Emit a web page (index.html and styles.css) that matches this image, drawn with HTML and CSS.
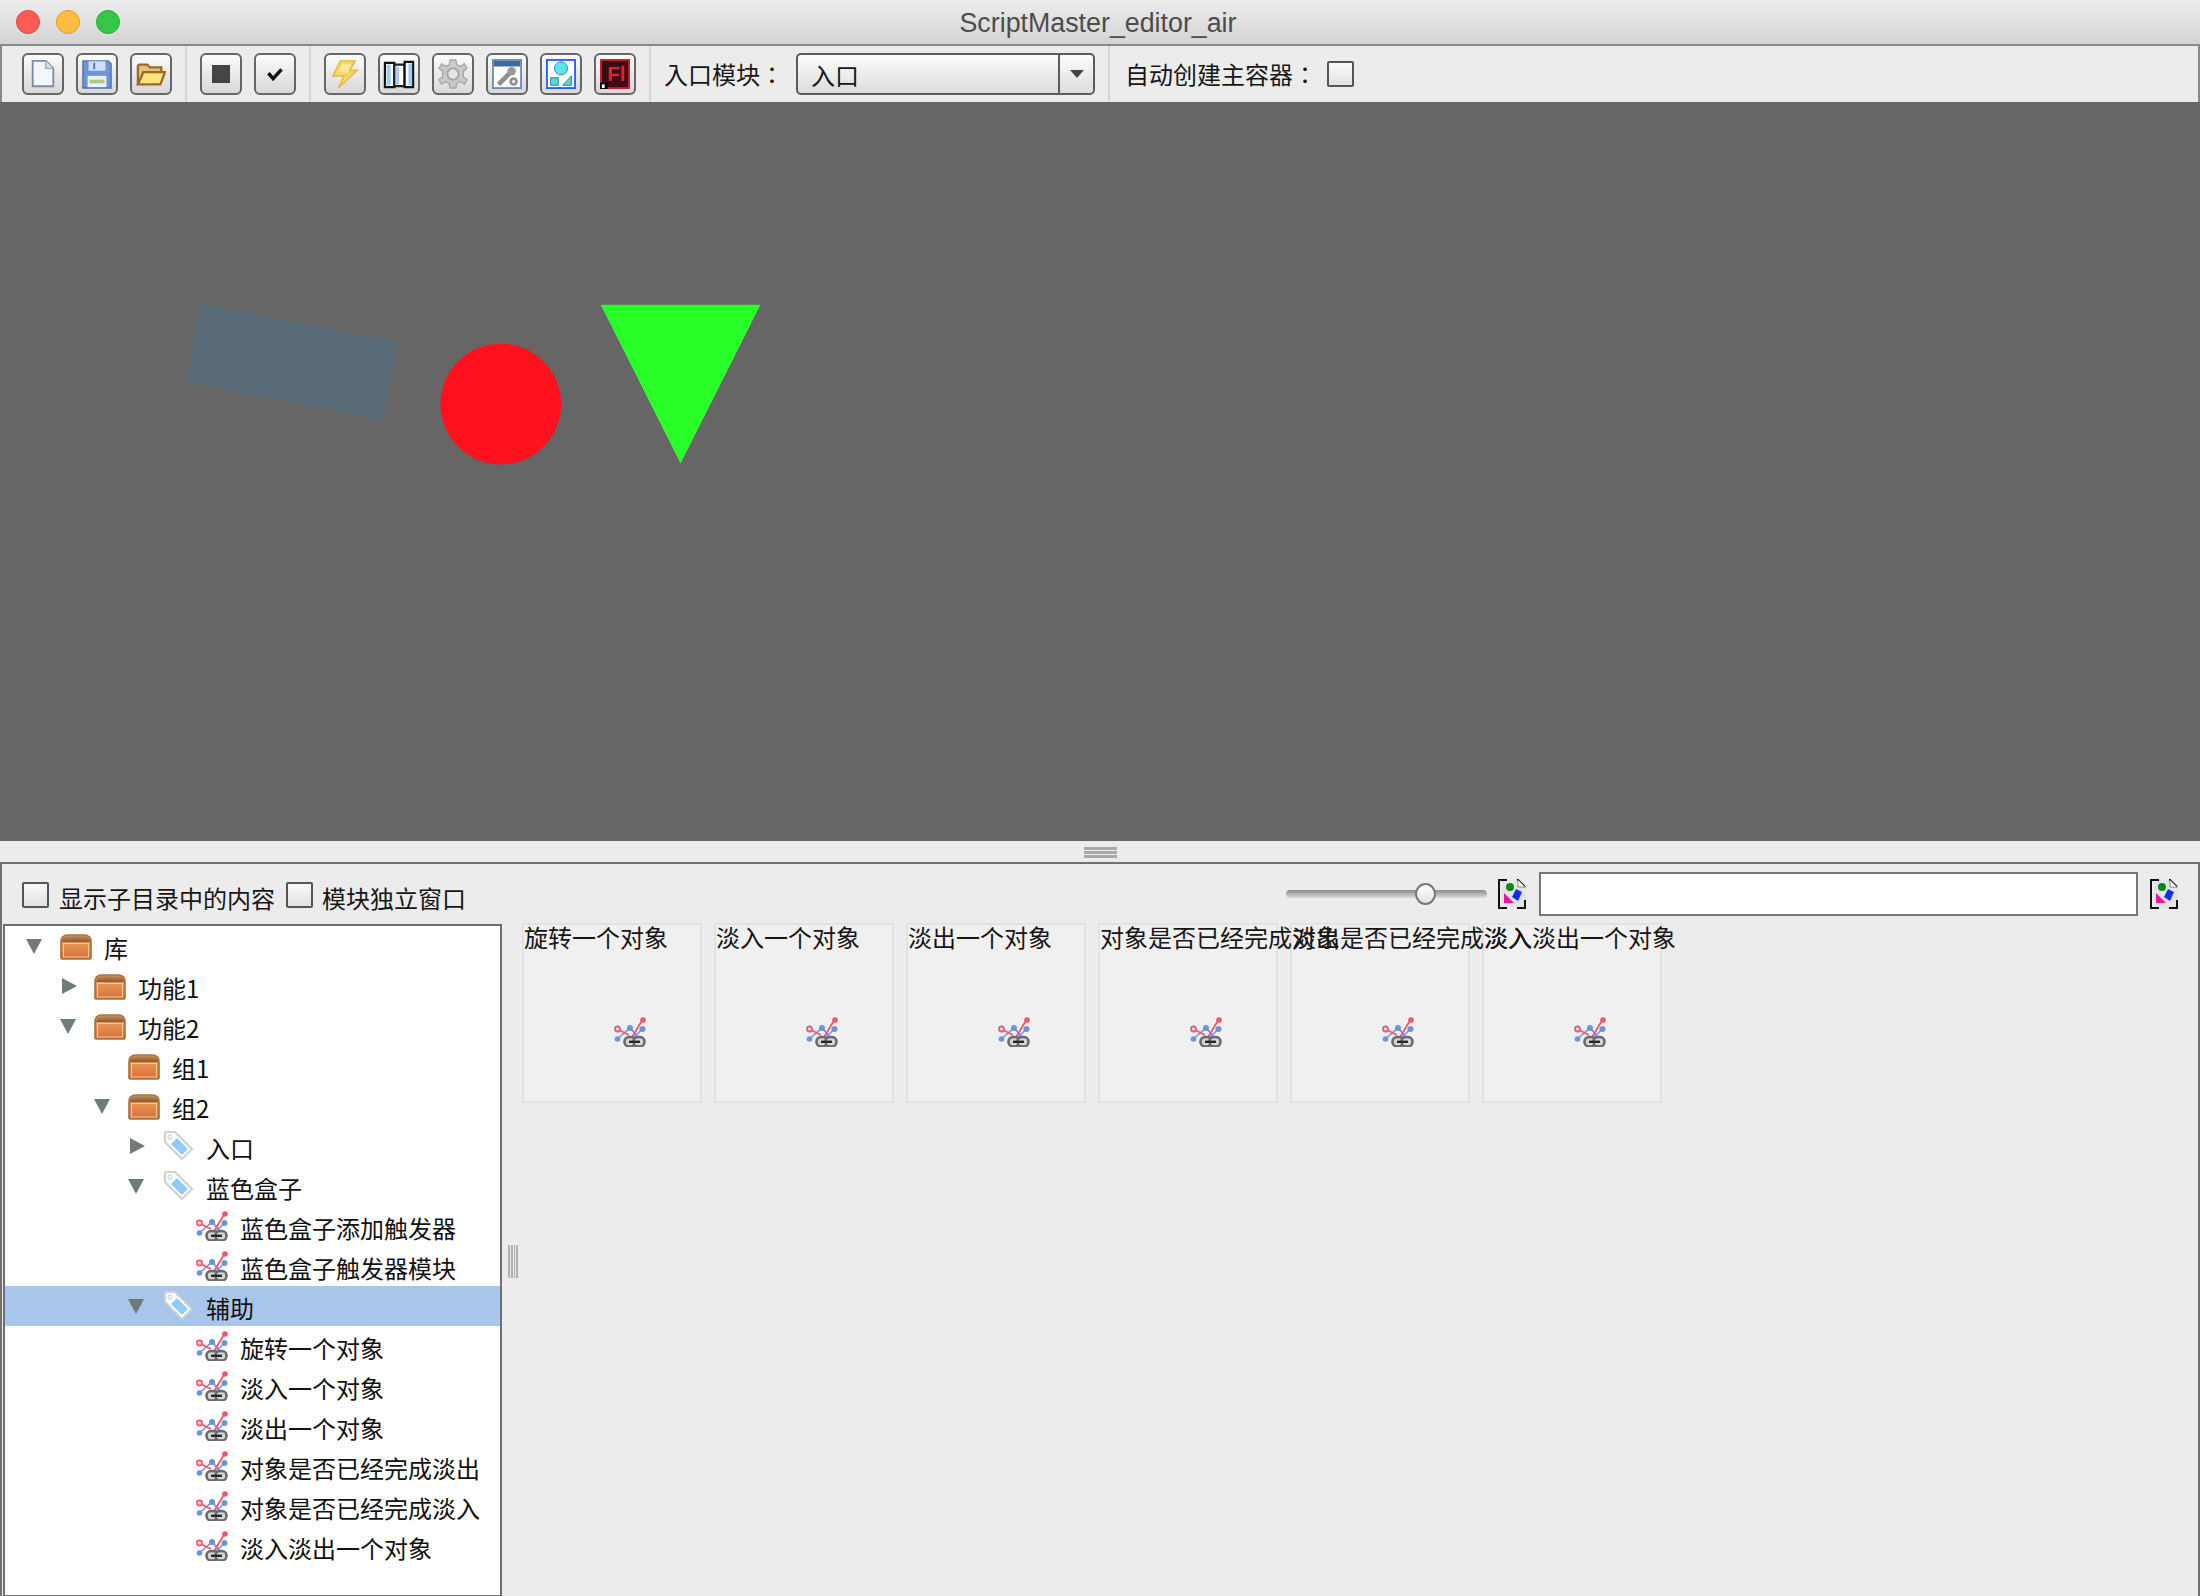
FILE: index.html
```html
<!DOCTYPE html>
<html lang="zh-CN">
<head>
<meta charset="utf-8">
<title>ScriptMaster_editor_air</title>
<link rel="stylesheet" href="styles.css">
</head>
<body>
<svg class="sprite" aria-hidden="true">
  <defs>
    <linearGradient id="boxBody" x1="0" y1="0" x2="0" y2="1"><stop offset="0" stop-color="#eeaa60"/><stop offset="1" stop-color="#d8703c"/></linearGradient>
    <linearGradient id="boxTop" x1="0" y1="0" x2="0" y2="1"><stop offset="0" stop-color="#c08a58"/><stop offset="1" stop-color="#8e5a2c"/></linearGradient>
    <symbol id="box" viewBox="0 0 32 26">
      <path d="M1 8Q1 1 8 1H24Q31 1 31 8V24Q31 25 30 25H2Q1 25 1 24Z" fill="url(#boxBody)" stroke="#a5703c" stroke-width="1.6"/>
      <path d="M2 8Q2 2 8 2H24Q30 2 30 8Z" fill="url(#boxTop)"/>
      <rect x="3.5" y="9.5" width="25" height="13.5" fill="none" stroke="#f6c58e" stroke-width="1"/>
    </symbol>
    <symbol id="tag" viewBox="0 0 30 30">
      <path d="M2 4Q2 2 4 2H12L29 19L19 29L2 12Z" fill="#fff" stroke="#cfcfcf" stroke-width="2"/>
      <path d="M14 8L25 19L19 25L8 14Z" fill="#8ccbfa"/>
      <circle cx="7" cy="7" r="2" fill="#fff" stroke="#c4c4c4"/>
    </symbol>
    <symbol id="script" viewBox="0 0 32 30">
      <path d="M3.5 22L16 11L24 20M28.5 12L18 22" fill="none" stroke="#6d94d8" stroke-width="1.6"/>
      <circle cx="3.5" cy="22" r="2.8" fill="#6d94d8"/><circle cx="16" cy="11" r="3" fill="#6d94d8"/><circle cx="28.5" cy="12" r="3" fill="#6d94d8"/>
      <path d="M3 12L15 18M29 2L17 22" fill="none" stroke="#f0566a" stroke-width="1.8"/>
      <circle cx="3.5" cy="12" r="2.6" fill="#ffd4da" stroke="#f0566a" stroke-width="1.6"/><circle cx="29" cy="3" r="2.8" fill="#f0566a"/>
      <rect x="10.5" y="20" width="11" height="9.5" rx="4.5" fill="#d4d4d4" stroke="#6a6a6a" stroke-width="2.6"/>
      <rect x="19.5" y="20" width="11" height="9.5" rx="4.5" fill="#d4d4d4" stroke="#6a6a6a" stroke-width="2.6"/>
      <rect x="15" y="23.6" width="11" height="2.4" fill="#2a2a2a"/>
    </symbol>
    <symbol id="media" viewBox="0 0 29 32">
      <path d="M4 2H20L28 9V30H4Z" fill="#e4e4e4"/>
      <path d="M9 2H1V30H9M19 2H20L27 9M27 22V30H19" fill="none" stroke="#111" stroke-width="2"/>
      <path d="M20 2V9H27" fill="#fff" stroke="#888"/>
      <circle cx="12" cy="9" r="4" fill="#078a1c"/>
      <path d="M6 15V25H16Z" fill="#ee12a0"/>
      <path d="M18 11L24 14L20 23L14 19Z" fill="#1030f0"/>
    </symbol>
  </defs>
</svg>

<div class="window">
  <header class="titlebar">
    <div class="lights">
      <span class="light light-red"></span><span class="light light-yellow"></span><span class="light light-green"></span>
    </div>
    <div class="title">ScriptMaster_editor_air</div>
  </header>

  <div class="toolbar">
    <div class="group group-first">
      <button class="tool"><svg class="glyph" viewBox="0 0 32 32"><path d="M5 2H19L27 10V29H5Z" fill="#f4f6fa" stroke="#7d8ea6" stroke-width="2"/><path d="M19 2V10H27" fill="#dfe4ec" stroke="#9aa8ba" stroke-width="1.5"/></svg></button>
      <button class="tool"><svg class="glyph" viewBox="0 0 32 32"><path d="M1 2H28L31 5V31H1Z" fill="#6b97d6" stroke="#4b74b4" stroke-width="1.5"/><rect x="7" y="2.5" width="18" height="10" fill="#cfe0f6"/><rect x="12" y="4" width="2" height="7" fill="#4b74b4"/><rect x="6" y="18" width="20" height="12" fill="#edf2f6"/><rect x="8" y="22" width="16" height="4" fill="#a8cc88"/></svg></button>
      <button class="tool"><svg class="glyph" viewBox="0 0 32 32"><path d="M2 27V8Q2 6 4 6H12L15 9H27V14H8Z" fill="#e9c27a" stroke="#9a6a2c" stroke-width="2.4"/><path d="M2 27L8 14H31L26 27Z" fill="#ffe47a" stroke="#9a6a2c" stroke-width="2.4"/></svg></button>
    </div>
    <div class="group">
      <button class="tool"><span class="stop"></span></button>
      <button class="tool"><svg class="glyph" viewBox="0 0 32 32"><path d="M9 15L14 21L23 11" fill="none" stroke="#111" stroke-width="3.6"/></svg></button>
    </div>
    <div class="group">
      <button class="tool"><svg class="glyph" viewBox="0 0 32 32"><path d="M11 2H27L21 12H29L9 31L15 18H3Z" fill="#f7d668" stroke="#e8b93c" stroke-width="1.6"/><path d="M13 5L9 14H19L23 6Z" fill="#fbe79b"/></svg></button>
      <button class="tool"><svg class="glyph glyph-wide" viewBox="0 0 34 32"><path d="M2 4H12V30H2Z" fill="#fff" stroke="#111" stroke-width="2.4"/><rect x="4" y="6" width="4" height="22" fill="#9ccaf2"/><path d="M12 6H23V29H12Z" fill="#fff" stroke="#222" stroke-width="2.4"/><rect x="14" y="8" width="3" height="19" fill="#9ccaf2"/><path d="M23 3H32V30H23Z" fill="#fff" stroke="#111" stroke-width="2.4"/><rect x="27" y="5" width="4" height="23" fill="#9ccaf2"/></svg></button>
      <button class="tool"><svg class="glyph" viewBox="0 0 32 32"><path d="M13 1H19L20 6L24 8L28 5L31 10L27 13V19L31 22L28 27L24 24L20 26L19 31H13L12 26L8 24L4 27L1 22L5 19V13L1 10L4 5L8 8L12 6Z" fill="#c9c9c9" stroke="#a9a9a9" stroke-width="1.5"/><circle cx="16" cy="16" r="6" fill="#e4e4e4" stroke="#a6a6a6" stroke-width="2"/></svg></button>
      <button class="tool"><svg class="glyph" viewBox="0 0 32 32"><rect x="1" y="1" width="30" height="30" fill="#fff" stroke="#6f8cb4" stroke-width="2"/><rect x="2" y="2" width="28" height="6" fill="#3d6aa2"/><path d="M7 27L20 14" stroke="#8f8f8f" stroke-width="5"/><circle cx="21" cy="13" r="4.5" fill="#9a9a9a"/><circle cx="23" cy="24" r="4.5" fill="#8f8f8f"/><circle cx="23" cy="24" r="1.6" fill="#fff"/></svg></button>
      <button class="tool"><svg class="glyph" viewBox="0 0 32 32"><rect x="1" y="1" width="30" height="30" fill="#fff" stroke="#2b62f0" stroke-width="2"/><ellipse cx="16" cy="10" rx="7" ry="7" fill="#58e6ee" stroke="#3a8a96"/><rect x="5" y="20" width="8" height="8" fill="#58d8de" stroke="#2c7a88"/><path d="M18 28L27 18V28Z" fill="#58d8de" stroke="#2c7a88"/></svg></button>
      <button class="tool"><svg class="glyph" viewBox="0 0 32 32"><rect x="1" y="1" width="30" height="30" fill="#3a0e16" stroke="#d4202c" stroke-width="2"/><text class="fl" x="8" y="23">Fl</text><rect x="0" y="25" width="8" height="7" fill="#000"/><rect x="2" y="27" width="3" height="4" fill="#fff"/></svg></button>
    </div>
    <div class="group group-module">
      <span class="txt txt-colon" lang="zh-TW">入口模块：</span>
      <div class="select"><span class="select-value">入口</span><span class="select-arrow"><i class="caret"></i></span></div>
    </div>
    <div class="group group-auto">
      <span class="txt txt-colon" lang="zh-TW">自动创建主容器：</span>
      <span class="check"></span>
    </div>
  </div>

  <main class="stage">
    <svg class="stage-art" viewBox="0 0 2200 740" aria-hidden="true">
      <polygon points="199,202 397,240 382,318 185,281" fill="#5a6b78"/>
      <circle cx="500" cy="302.5" r="60.5" fill="#ff111e"/>
      <polygon points="600,203 760,203 680,362" fill="#2aff2a"/>
    </svg>
  </main>

  <div class="hsplit"><span class="grip"><i></i><i></i><i></i></span></div>

  <section class="lower">
    <div class="lower-bar">
      <span class="check check-a"></span><span class="txt lbl-a">显示子目录中的内容</span>
      <span class="check check-b"></span><span class="txt lbl-b">模块独立窗口</span>
      <div class="slider"><span class="thumb"></span></div>
      <svg class="media"><use href="#media"/></svg>
      <div class="search"></div>
      <svg class="media"><use href="#media"/></svg>
    </div>
    <div class="split">
      <div class="tree">
        <div class="row d0"><span class="slot"><i class="down"></i></span><svg class="ico ico-box"><use href="#box"/></svg><span class="txt">库</span></div>
        <div class="row d1"><span class="slot"><i class="right"></i></span><svg class="ico ico-box"><use href="#box"/></svg><span class="txt">功能1</span></div>
        <div class="row d1"><span class="slot"><i class="down"></i></span><svg class="ico ico-box"><use href="#box"/></svg><span class="txt">功能2</span></div>
        <div class="row d2"><span class="slot"></span><svg class="ico ico-box"><use href="#box"/></svg><span class="txt">组1</span></div>
        <div class="row d2"><span class="slot"><i class="down"></i></span><svg class="ico ico-box"><use href="#box"/></svg><span class="txt">组2</span></div>
        <div class="row d3"><span class="slot"><i class="right"></i></span><svg class="ico ico-tag"><use href="#tag"/></svg><span class="txt">入口</span></div>
        <div class="row d3"><span class="slot"><i class="down"></i></span><svg class="ico ico-tag"><use href="#tag"/></svg><span class="txt">蓝色盒子</span></div>
        <div class="row d4"><span class="slot"></span><svg class="ico ico-leaf"><use href="#script"/></svg><span class="txt">蓝色盒子添加触发器</span></div>
        <div class="row d4"><span class="slot"></span><svg class="ico ico-leaf"><use href="#script"/></svg><span class="txt">蓝色盒子触发器模块</span></div>
        <div class="row d3 selected"><span class="slot"><i class="down"></i></span><svg class="ico ico-tag"><use href="#tag"/></svg><span class="txt">辅助</span></div>
        <div class="row d4"><span class="slot"></span><svg class="ico ico-leaf"><use href="#script"/></svg><span class="txt">旋转一个对象</span></div>
        <div class="row d4"><span class="slot"></span><svg class="ico ico-leaf"><use href="#script"/></svg><span class="txt">淡入一个对象</span></div>
        <div class="row d4"><span class="slot"></span><svg class="ico ico-leaf"><use href="#script"/></svg><span class="txt">淡出一个对象</span></div>
        <div class="row d4"><span class="slot"></span><svg class="ico ico-leaf"><use href="#script"/></svg><span class="txt">对象是否已经完成淡出</span></div>
        <div class="row d4"><span class="slot"></span><svg class="ico ico-leaf"><use href="#script"/></svg><span class="txt">对象是否已经完成淡入</span></div>
        <div class="row d4"><span class="slot"></span><svg class="ico ico-leaf"><use href="#script"/></svg><span class="txt">淡入淡出一个对象</span></div>
      </div>
      <div class="vsplit"><i></i><i></i><i></i><i></i></div>
      <div class="cards">
        <div class="card"><span class="card-label">旋转一个对象</span><svg class="card-ico"><use href="#script"/></svg></div>
        <div class="card"><span class="card-label">淡入一个对象</span><svg class="card-ico"><use href="#script"/></svg></div>
        <div class="card"><span class="card-label">淡出一个对象</span><svg class="card-ico"><use href="#script"/></svg></div>
        <div class="card"><span class="card-label">对象是否已经完成淡出</span><svg class="card-ico"><use href="#script"/></svg></div>
        <div class="card"><span class="card-label">对象是否已经完成淡入</span><svg class="card-ico"><use href="#script"/></svg></div>
        <div class="card"><span class="card-label">淡入淡出一个对象</span><svg class="card-ico"><use href="#script"/></svg></div>
      </div>
    </div>
  </section>
</div>
</body>
</html>
```

FILE: styles.css
```css
* { box-sizing: border-box; }
html, body { margin: 0; padding: 0; }
body {
  width: 2200px;
  height: 1596px;
  overflow: hidden;
  background: #ececec;
  font-family: "Noto Sans CJK SC", "Liberation Sans", sans-serif;
  font-size: 24px;
  color: #161616;
}
.sprite { display: block; width: 0; height: 0; }
.window { display: flex; flex-direction: column; width: 2200px; height: 1596px; }

/* title bar */
.titlebar {
  position: relative;
  flex: 0 0 46px;
  display: flex;
  align-items: flex-start;
  padding: 10px 16px 0;
  background: linear-gradient(#ececec, #d4d4d4);
  border-bottom: 2px solid #8a8a8a;
  border-radius: 8px 8px 0 0;
}
.lights { display: flex; gap: 16px; }
.light { width: 24px; height: 24px; border-radius: 50%; }
.light-red { background: #fc5b57; border: 1px solid #e2463f; }
.light-yellow { background: #fdbc40; border: 1px solid #dfa023; }
.light-green { background: #33c748; border: 1px solid #28ab35; }
.title {
  position: absolute;
  left: 0;
  right: 0;
  top: 7px;
  text-align: center;
  padding-right: 4px;
  font-family: "Liberation Sans", sans-serif;
  font-size: 26.8px;
  line-height: 32px;
  color: #4c4c4c;
}

/* main toolbar */
.toolbar {
  flex: 0 0 56px;
  display: flex;
  align-items: stretch;
  background: #ececec;
  border-left: 2px solid #8a8a8a;
  border-right: 2px solid #8a8a8a;
}
.group {
  display: flex;
  align-items: center;
  gap: 12px;
  padding: 0 13px;
  border-right: 2px solid #d6d6d6;
}
.group-first { padding-left: 20px; }
.group-module { padding-right: 13px; }
.group-auto { gap: 10px; padding-left: 15px; border-right: 0; }
.tool {
  width: 42px;
  height: 42px;
  padding: 0;
  display: flex;
  align-items: center;
  justify-content: center;
  background: linear-gradient(#fbfbfb, #d8d8d8);
  border: 2px solid #666;
  border-radius: 6px;
}
.glyph { width: 30px; height: 30px; filter: blur(.4px); }
.glyph-wide { width: 34px; }
.stop { width: 18px; height: 18px; background: #444; }
.fl { font-family: "Liberation Sans", sans-serif; font-size: 22px; font-weight: 700; fill: #e0242e; }
.txt { white-space: nowrap; }
.txt-colon { font-family: "Noto Sans CJK TC", "Liberation Sans", sans-serif; margin-top: -2px; }
.select {
  width: 299px;
  height: 42px;
  display: flex;
  background: linear-gradient(#fdfdfd, #dcdcdc);
  border: 2px solid #5c5c5c;
  border-radius: 5px;
}
.select-value { flex: 1; padding-left: 13px; line-height: 39px; }
.select-arrow {
  flex: 0 0 35px;
  display: flex;
  align-items: center;
  justify-content: center;
  border-left: 2px solid #5c5c5c;
}
.caret { width: 0; height: 0; border-left: 7px solid transparent; border-right: 7px solid transparent; border-top: 8px solid #444; }
.check {
  flex: 0 0 auto;
  width: 27px;
  height: 26px;
  background: linear-gradient(#fafafa, #e2e2e2);
  border: 2px solid #555;
  border-radius: 2px;
}

/* stage */
.stage { flex: 0 0 739px; background: #666; }
.stage-art { display: block; width: 2200px; height: 739px; }
.hsplit { flex: 0 0 21px; display: flex; justify-content: center; padding-top: 6px; }
.grip { display: flex; flex-direction: column; gap: 1px; width: 33px; }
.grip i { display: block; height: 3px; background: #a8a8a8; }

/* lower panel */
.lower {
  flex: 1;
  min-height: 0;
  display: flex;
  flex-direction: column;
  border-top: 2px solid #707070;
  border-left: 2px solid #707070;
  border-right: 2px solid #707070;
}
.lower-bar {
  flex: 0 0 60px;
  display: flex;
  align-items: center;
  padding: 0 19px 0 20px;
}
.lower-bar .check { margin-top: 2px; }
.lower-bar .txt { padding-top: 6px; }
.lbl-a { margin-left: 10px; }
.check-b { margin-left: 11px; }
.lbl-b { margin-left: 9px; }
.slider {
  position: relative;
  width: 201px;
  height: 8px;
  margin-left: auto;
  border-radius: 4px;
  background: linear-gradient(#8a8a8a, #dcdcdc);
}
.thumb {
  position: absolute;
  left: 129px;
  top: -7px;
  width: 21px;
  height: 22px;
  border-radius: 50%;
  background: linear-gradient(#fff, #e2e2e2);
  border: 2px solid #777;
}
.media { flex: 0 0 29px; width: 29px; height: 32px; margin-left: 11px; }
.search {
  width: 599px;
  height: 44px;
  margin-left: 12px;
  background: #fff;
  border: 2px solid #777;
}
.search + .media { margin-left: 12px; }

.split { flex: 1; min-height: 0; display: flex; padding-left: 1px; }
.tree {
  flex: 0 0 499px;
  background: #fff;
  border: 2px solid #707070;
  border-bottom-width: 1px;
  overflow: hidden;
}
.row { display: flex; align-items: center; height: 40px; white-space: nowrap; }
.row .txt { padding-top: 3px; color: #111; margin-left: -1px; }
.d0 { padding-left: 21px; }
.d1 { padding-left: 55px; }
.d2 { padding-left: 89px; }
.d3 { padding-left: 123px; }
.d4 { padding-left: 157px; }
.selected { background: #a8c5ea; }
.slot { flex: 0 0 34px; display: flex; }
.down { width: 0; height: 0; border-left: 8px solid transparent; border-right: 8px solid transparent; border-top: 15px solid #6f7b7b; }
.right { width: 0; height: 0; margin: -1px 0 0 2px; border-top: 8px solid transparent; border-bottom: 8px solid transparent; border-left: 15px solid #6f7b7b; }
.ico { flex: 0 0 32px; width: 32px; margin-right: 13px; filter: blur(.4px); }
.ico-box { height: 26px; margin-top: 2px; }
.ico-tag { height: 30px; margin-top: -2px; }
.ico-leaf { height: 30px; }

.vsplit { flex: 0 0 auto; align-self: center; display: flex; gap: 1px; margin: 2px 4px 0 6px; width: 10px; height: 33px; }
.vsplit i { display: block; width: 2px; height: 100%; background: #b0b0b0; }

.cards { display: flex; align-items: flex-start; gap: 12px; margin-top: -1px; }
.card {
  flex: 0 0 180px;
  min-width: 0;
  width: 180px;
  height: 180px;
  display: flex;
  flex-direction: column;
  background: #f0f0f0;
  border: 2px solid #e2e2e2;
}
.card-label { position: relative; z-index: 1; height: 30px; line-height: 24px; white-space: nowrap; }
.card-ico { width: 32px; height: 30px; margin: 62px 0 0 90px; filter: blur(.4px); }
```
